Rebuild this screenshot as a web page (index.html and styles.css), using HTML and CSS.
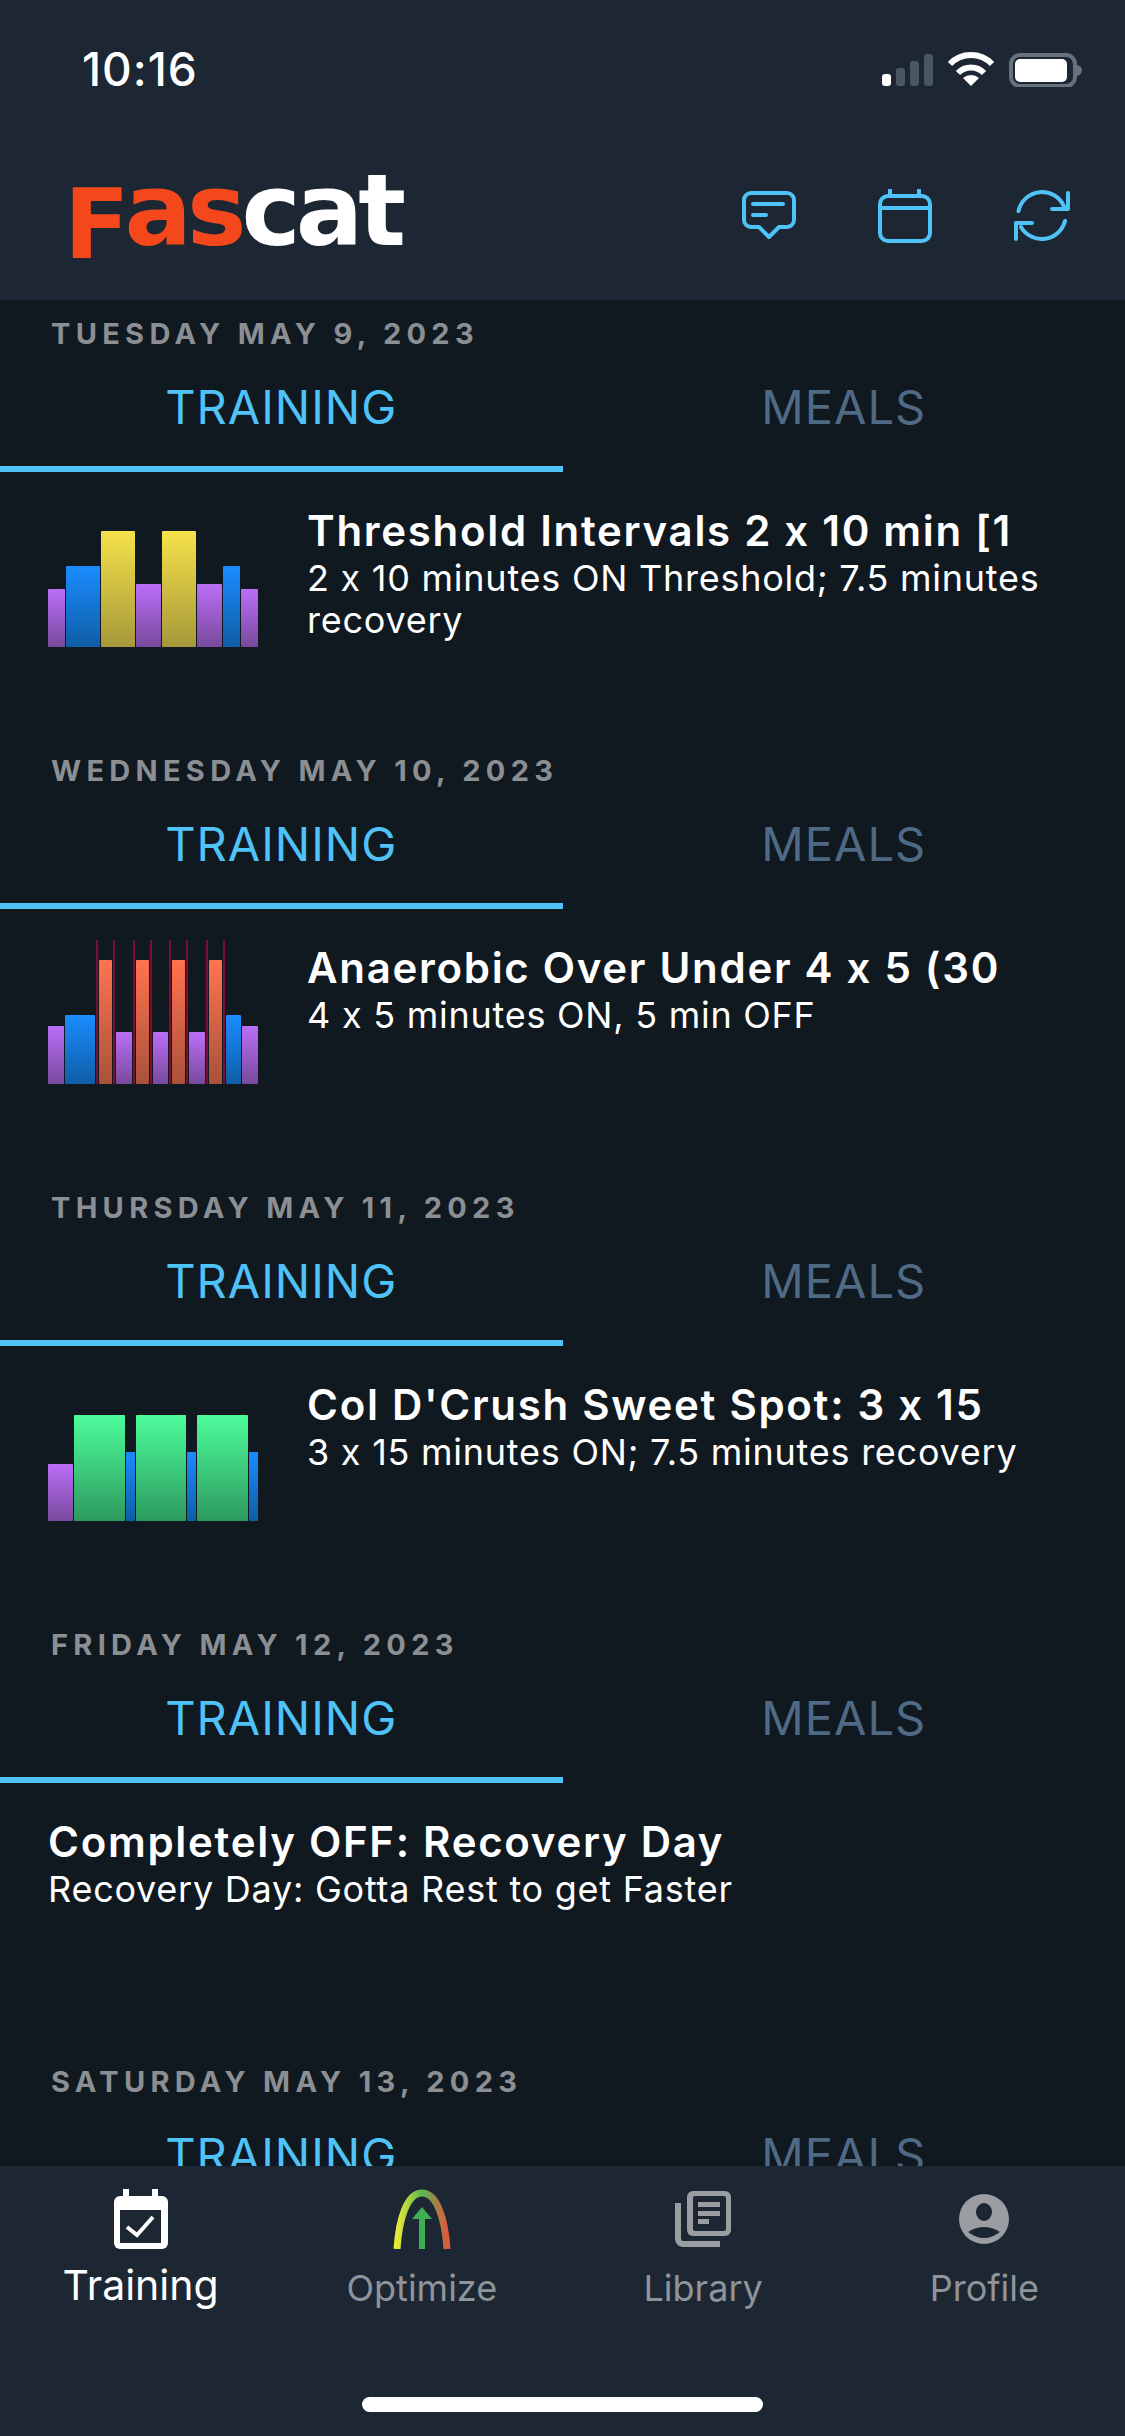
FILE: index.html
```html
<!DOCTYPE html>
<html lang="en">
<head>
    <meta charset="UTF-8">
    <title>FasCat Training</title>
    <link rel="stylesheet" href="styles.css">
</head>
<body>
    <div class="screen">
        <header class="top">
            <div class="status">
                <span class="time">10:16</span>
                <svg class="status-icons" width="200" height="36" viewBox="0 0 200 36">
                    <rect x="0" y="23" width="9" height="12" rx="3" fill="#fff"/>
                    <rect x="14" y="17" width="9" height="18" rx="3" fill="#4a5661"/>
                    <rect x="28" y="10" width="9" height="25" rx="3" fill="#4a5661"/>
                    <rect x="42" y="3" width="9" height="32" rx="3" fill="#4a5661"/>
                    <g fill="none" stroke="#fff" stroke-width="6">
                        <path d="M68 13 A29 29 0 0 1 110 13"/>
                        <path d="M76 22 A18 18 0 0 1 102 22"/>
                    </g>
                    <path d="M81 27 A12 12 0 0 1 97 27 L89 35 Z" fill="#fff"/>
                    <rect x="129" y="4" width="64" height="31" rx="9" fill="none" stroke="#66717c" stroke-width="4"/>
                    <rect x="133" y="8" width="52" height="23" rx="5" fill="#fff"/>
                    <path d="M195 14 C199 15 200 17 200 19 C200 21 199 24 195 25 Z" fill="#66717c"/>
                </svg>
            </div>
            <div class="appbar">
                <div class="logo"><span class="logo-red"><span class="logo-f">F</span>as</span>cat</div>
                <div class="actions">
                    <svg width="54" height="50" viewBox="0 0 54 50" class="action">
                        <path d="M9 2 H45 a7 7 0 0 1 7 7 V29 a7 7 0 0 1 -7 7 H37 L27 46 L17 36 H9 a7 7 0 0 1 -7 -7 V9 a7 7 0 0 1 7 -7 Z"/>
                        <path d="M11 13 H41 M11 24 H24"/>
                    </svg>
                    <svg width="54" height="54" viewBox="0 0 54 54" class="action">
                        <rect x="2" y="7" width="50" height="45" rx="8"/>
                        <path d="M2 19 H52 M12 1 V7 M41 1 V7"/>
                    </svg>
                    <svg width="56" height="52" viewBox="0 0 56 52" class="action">
                        <path d="M4.5 21 A24 24 0 0 1 50 16.5 M54 3 V19 H38"/>
                        <path d="M51 31 A24 24 0 0 1 7 37 M2 49 V33 H18"/>
                    </svg>
                </div>
            </div>
        </header>

        <main class="days">
            <section class="day">
                <div class="date">TUESDAY MAY 9, 2023</div>
                <div class="tabs">
                    <div class="tab active">TRAINING</div>
                    <div class="tab">MEALS</div>
                </div>
                <div class="entry">
                    <div class="graph">
                        <div class="bar purple" style="width:17px;height:58px"></div>
                        <div class="bar blue" style="width:34px;height:81px"></div>
                        <div class="bar yellow" style="width:34px;height:116px"></div>
                        <div class="bar purple" style="width:25px;height:63px"></div>
                        <div class="bar yellow" style="width:34px;height:116px"></div>
                        <div class="bar purple" style="width:25px;height:63px"></div>
                        <div class="bar blue" style="width:17px;height:81px"></div>
                        <div class="bar purple" style="width:17px;height:58px"></div>
                    </div>
                    <div class="info">
                        <div class="title">Threshold Intervals 2 x 10 min [1</div>
                        <div class="desc">2 x 10 minutes ON Threshold; 7.5 minutes recovery</div>
                    </div>
                </div>
            </section>

            <section class="day">
                <div class="date">WEDNESDAY MAY 10, 2023</div>
                <div class="tabs">
                    <div class="tab active">TRAINING</div>
                    <div class="tab">MEALS</div>
                </div>
                <div class="entry">
                    <div class="graph">
                        <div class="bar purple" style="width:16px;height:58px"></div>
                        <div class="bar blue" style="width:31px;height:69px"></div>
                        <div class="over"><div class="bar orange"></div></div>
                        <div class="bar purple" style="width:16px;height:52px"></div>
                        <div class="over"><div class="bar orange"></div></div>
                        <div class="bar purple" style="width:16px;height:52px"></div>
                        <div class="over"><div class="bar orange"></div></div>
                        <div class="bar purple" style="width:16px;height:52px"></div>
                        <div class="over"><div class="bar orange"></div></div>
                        <div class="bar blue" style="width:16px;height:69px"></div>
                        <div class="bar purple" style="width:16px;height:58px"></div>
                    </div>
                    <div class="info">
                        <div class="title">Anaerobic Over Under 4 x 5 (30</div>
                        <div class="desc">4 x 5 minutes ON, 5 min OFF</div>
                    </div>
                </div>
            </section>

            <section class="day">
                <div class="date">THURSDAY MAY 11, 2023</div>
                <div class="tabs">
                    <div class="tab active">TRAINING</div>
                    <div class="tab">MEALS</div>
                </div>
                <div class="entry">
                    <div class="graph">
                        <div class="bar purple" style="width:25px;height:57px"></div>
                        <div class="bar green" style="width:51px;height:106px"></div>
                        <div class="bar blue" style="width:9px;height:69px"></div>
                        <div class="bar green" style="width:51px;height:106px"></div>
                        <div class="bar blue" style="width:9px;height:69px"></div>
                        <div class="bar green" style="width:51px;height:106px"></div>
                        <div class="bar blue" style="width:9px;height:69px"></div>
                    </div>
                    <div class="info">
                        <div class="title">Col D'Crush Sweet Spot: 3 x 15</div>
                        <div class="desc">3 x 15 minutes ON; 7.5 minutes recovery</div>
                    </div>
                </div>
            </section>

            <section class="day">
                <div class="date">FRIDAY MAY 12, 2023</div>
                <div class="tabs">
                    <div class="tab active">TRAINING</div>
                    <div class="tab">MEALS</div>
                </div>
                <div class="entry">
                    <div class="info">
                        <div class="title">Completely OFF: Recovery Day</div>
                        <div class="desc">Recovery Day: Gotta Rest to get Faster</div>
                    </div>
                </div>
            </section>

            <section class="day">
                <div class="date">SATURDAY MAY 13, 2023</div>
                <div class="tabs">
                    <div class="tab active">TRAINING</div>
                    <div class="tab">MEALS</div>
                </div>
            </section>
        </main>

        <footer class="bottom">
            <nav class="nav">
                <div class="nav-item current">
                    <div class="nav-icon">
                        <svg width="54" height="60" viewBox="0 0 54 60">
                            <rect x="0" y="7" width="54" height="53" rx="6" fill="#fff"/>
                            <rect x="9" y="0" width="6" height="10" fill="#fff"/>
                            <rect x="38" y="0" width="6" height="10" fill="#fff"/>
                            <rect x="6" y="21" width="41" height="33" fill="#1c2733"/>
                            <path d="M13 38 L23 46 L39 28" fill="none" stroke="#fff" stroke-width="4"/>
                        </svg>
                    </div>
                    <span>Training</span>
                </div>
                <div class="nav-item">
                    <div class="nav-icon">
                        <svg width="58" height="60" viewBox="0 0 58 60">
                            <defs>
                                <linearGradient id="arch" x1="0" y1="0" x2="1" y2="0">
                                    <stop offset="0" stop-color="#e8ea3a"/>
                                    <stop offset="0.5" stop-color="#58b84f"/>
                                    <stop offset="1" stop-color="#dc5a3e"/>
                                </linearGradient>
                            </defs>
                            <path d="M4 60 C6 30 14 4 29 4 C44 4 52 30 54 60" fill="none" stroke="url(#arch)" stroke-width="7"/>
                            <path d="M29 60 V26" stroke="#3fae55" stroke-width="6"/>
                            <path d="M29 18 L39 30 H19 Z" fill="#3fae55"/>
                        </svg>
                    </div>
                    <span>Optimize</span>
                </div>
                <div class="nav-item">
                    <div class="nav-icon">
                        <svg width="56" height="56" viewBox="0 0 56 56">
                            <path d="M3 12 V48 a5 5 0 0 0 5 5 H45" fill="none" stroke="#9a9da1" stroke-width="6"/>
                            <rect x="12" y="0" width="44" height="45" rx="6" fill="#9a9da1"/>
                            <rect x="18" y="5" width="33" height="35" rx="2" fill="#1c2733"/>
                            <rect x="23" y="11" width="22" height="5" fill="#9a9da1"/>
                            <rect x="23" y="20" width="22" height="5" fill="#9a9da1"/>
                            <rect x="23" y="28" width="11" height="5" fill="#9a9da1"/>
                        </svg>
                    </div>
                    <span>Library</span>
                </div>
                <div class="nav-item">
                    <div class="nav-icon">
                        <svg width="50" height="50" viewBox="0 0 50 50">
                            <circle cx="25" cy="25" r="25" fill="#9a9da1"/>
                            <ellipse cx="25" cy="18" rx="8" ry="9" fill="#1c2733"/>
                            <path d="M9 38 Q25 28 41 38 Q25 50 9 38 Z" fill="#1c2733"/>
                        </svg>
                    </div>
                    <span>Profile</span>
                </div>
            </nav>
            <div class="home-bar"></div>
        </footer>
    </div>
</body>
</html>
```

FILE: styles.css
```css
* {
    margin: 0;
    padding: 0;
    box-sizing: border-box;
}

body {
    font-family: 'Inter', 'Liberation Sans', sans-serif;
    background-color: #101820;
    color: #fff;
}

.screen {
    width: 1125px;
    height: 2436px;
    display: flex;
    flex-direction: column;
    overflow: hidden;
}

/* Cabecera */
.top {
    height: 300px;
    flex-shrink: 0;
    background-color: #1c2733;
}

.status {
    height: 138px;
    padding: 0 43px 0 82px;
    display: flex;
    justify-content: space-between;
    align-items: center;
}

.time {
    font-size: 46px;
    font-weight: 500;
    letter-spacing: 1px;
}

.appbar {
    height: 162px;
    padding: 0 55px 0 64px;
    display: flex;
    justify-content: space-between;
    align-items: center;
}

.logo {
    margin-bottom: 16px;
    font-family: 'DejaVu Sans', sans-serif;
    font-size: 100px;
    font-weight: 700;
    line-height: 100px;
    letter-spacing: -5px;
    color: #fff;
}

.logo-red {
    color: #f4481c;
}

.logo-f {
    font-size: 96px;
    position: relative;
    top: 13px;
}

.actions {
    display: flex;
    align-items: center;
    gap: 82px;
    margin-bottom: 6px;
}

.action {
    fill: none;
    stroke: #4fc3f7;
    stroke-width: 4;
    stroke-linecap: round;
    stroke-linejoin: round;
}

/* Lista de dias */
.days {
    flex: 1;
    min-height: 0;
    overflow: hidden;
}

.day {
    height: 437px;
}

.date {
    padding: 16px 0 0 51px;
    font-size: 29px;
    line-height: 36px;
    font-weight: 700;
    letter-spacing: 5.3px;
    color: #8b8f93;
}

.tabs {
    display: flex;
    height: 120px;
}

.tab {
    width: 50%;
    height: 120px;
    padding-top: 27px;
    text-align: center;
    font-size: 47px;
    line-height: 56px;
    letter-spacing: 1px;
    color: #4f6a85;
}

.tab.active {
    color: #4fc3f7;
    border-bottom: 6px solid #4fc3f7;
}

.entry {
    display: flex;
    gap: 49px;
    padding: 0 48px;
}

.graph {
    width: 210px;
    height: 146px;
    margin-top: 29px;
    flex-shrink: 0;
    display: flex;
    align-items: flex-end;
    gap: 1px;
}

.bar {
    border-radius: 1px;
}

.purple {
    background: linear-gradient(#bb6ef8, #774a9c);
}

.blue {
    background: linear-gradient(#1a8cff, #0f5ea6);
}

.yellow {
    background: linear-gradient(#f6e24a, #a5983a);
}

.green {
    background: linear-gradient(#4dfc9b, #2c9a5e);
}

.orange {
    width: 13px;
    height: 124px;
    background: linear-gradient(#ff7350, #a8523a);
}

.over {
    width: 19px;
    height: 144px;
    padding: 0 1px;
    display: flex;
    align-items: flex-end;
    border-left: 2px solid #7a0f30;
    border-right: 2px solid #7a0f30;
}

.info {
    padding-top: 33px;
    min-width: 0;
}

.title {
    font-size: 42px;
    line-height: 52px;
    font-weight: 600;
    letter-spacing: 1.7px;
    white-space: nowrap;
}

.desc {
    font-size: 36px;
    line-height: 42px;
    letter-spacing: 0.75px;
}

/* Navegacion inferior */
.bottom {
    height: 270px;
    flex-shrink: 0;
    position: relative;
    background-color: #1c2733;
}

.nav {
    display: grid;
    grid-template-columns: repeat(4, 1fr);
    padding-top: 23px;
}

.nav-item {
    display: flex;
    flex-direction: column;
    align-items: center;
    font-size: 36px;
    line-height: 44px;
    color: #8e9499;
}

.nav-icon {
    height: 60px;
    margin-bottom: 17px;
    display: flex;
    align-items: center;
}

.nav-item.current {
    font-size: 41px;
    line-height: 38px;
    color: #fff;
}

.home-bar {
    position: absolute;
    left: 362px;
    bottom: 24px;
    width: 401px;
    height: 15px;
    border-radius: 8px;
    background-color: #fff;
}
```
